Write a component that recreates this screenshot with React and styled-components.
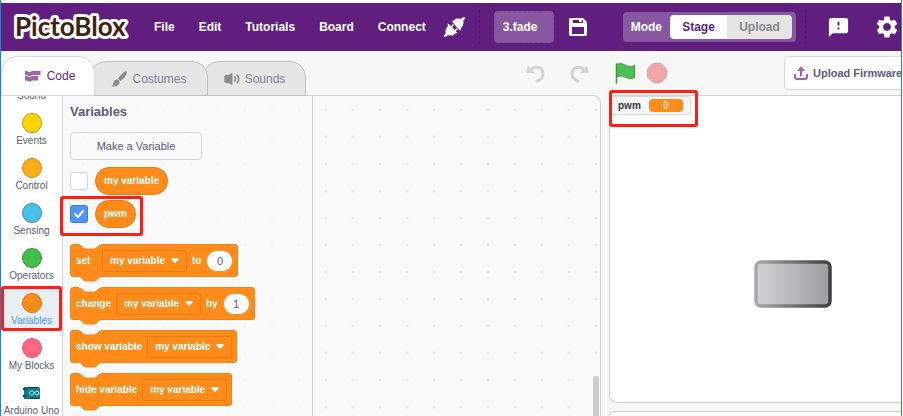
import React from "react";
import styled, { createGlobalStyle, css } from "styled-components";
import { MdFeedback, MdSettings } from "react-icons/md";

const Global = createGlobalStyle`
  * { box-sizing: border-box; }
  body { margin: 0; background: #fff; }
  body, button, input, select { font-family: "Liberation Sans", Arial, sans-serif; }
  button { margin: 0; padding: 0; border: 0; background: none; cursor: pointer; }
  svg { display: block; flex: none; }
`;

const Window = styled.div`
  display: flex;
  flex-direction: column;
  height: 100vh;
  margin-right: 1px;
  padding-top: 3px;
  border-left: 1px solid #1a84d8;
  border-right: 1px solid #2a7fb8;
  overflow: hidden;
  background: #fff;
`;

const MenuBar = styled.header`
  display: flex;
  align-items: center;
  flex: none;
  height: 48px;
  padding: 0 1px 0 11px;
  background: #601f7e;
  color: #fff;
`;

const Logo = styled.a`
  display: flex;
  text {
    font: 700 26px "Lato", sans-serif;
    fill: #3d2314;
    stroke: #fff;
    stroke-width: 6px;
    stroke-linejoin: round;
    paint-order: stroke;
  }
`;

const Menu = styled.nav`
  display: flex;
  align-items: center;
  gap: 24px;
  margin-left: 22px;
`;

const MenuItem = styled.button`
  color: #fff;
  font-size: 12px;
  font-weight: bold;
  line-height: 16px;
`;

const IconButton = styled.button`
  display: flex;
  color: #fff;
  margin-left: ${(p) => p.$gap || 0}px;
`;

const Divider = styled.div`
  height: 34px;
  margin-left: ${(p) => p.$gap}px;
  border-left: 1px dashed #501a6a;
`;

const ProjectName = styled.input`
  width: 60px;
  height: 32px;
  margin-left: 14px;
  padding: 0 8px;
  border: 1px dashed #7d4c96;
  border-radius: 4px;
  background: #87589f;
  color: #fff;
  font-size: 12px;
  font-weight: bold;
`;

const BarEnd = styled.div`
  display: flex;
  align-items: center;
  margin-left: auto;
`;

const ModeBox = styled.div`
  display: flex;
  align-items: center;
  height: 30px;
  padding: 3px 4px 3px 8px;
  border-radius: 4px;
  background: #87589f;
  font-size: 12px;
  font-weight: bold;
`;

const ModeSwitch = styled.div`
  display: flex;
  height: 24px;
  margin-left: 8px;
  border-radius: 4px;
  overflow: hidden;
`;

const ModeOption = styled.button`
  width: ${(p) => (p.$active ? 57 : 65)}px;
  background: ${(p) => (p.$active ? "#fff" : "#e5e5e5")};
  color: ${(p) => (p.$active ? "#601f7e" : "#85858c")};
  font-size: 12px;
  font-weight: bold;
`;

const Main = styled.main`
  display: grid;
  grid-template-columns: minmax(0, 1fr) 292px;
  column-gap: 8px;
  flex: 1;
  min-height: 0;
  background: #f7f7f7;
`;

const Editor = styled.section`
  display: flex;
  flex-direction: column;
  min-width: 0;
  min-height: 0;
`;

const TabRow = styled.div`
  display: flex;
  align-items: flex-end;
  flex: none;
  height: 45px;
  padding-right: 12px;
`;

const Tab = styled.button`
  display: flex;
  align-items: center;
  justify-content: center;
  gap: ${(p) => (p.$active ? 6 : 5)}px;
  width: ${(p) => p.$width}px;
  height: ${(p) => (p.$active ? 40 : 35)}px;
  margin-left: ${(p) => (p.$active ? 0 : -5)}px;
  padding-left: ${(p) => (p.$active ? 4 : 0)}px;
  border: 1px solid ${(p) => (p.$active ? "#d9d9d9" : "#bfbfbf")};
  border-radius: 16px 16px 0 0;
  background: ${(p) => (p.$active ? "#fff" : "#e6e6e6")};
  color: ${(p) => (p.$active ? "#601f7e" : "#7c8194")};
  font-size: 12px;
  position: relative;
  z-index: ${(p) => p.$layer};
`;

const History = styled.div`
  display: flex;
  gap: 25px;
  margin: 0 0 13px auto;
`;

const EditorBody = styled.div`
  display: flex;
  flex: 1;
  min-height: 0;
  border-top: 1px solid #cfcfcf;
  border-right: 1px solid #cfcfcf;
  border-top-right-radius: 8px;
  margin-top: -1px;
  overflow: hidden;
  background: #f9f9f9;
`;

const CategoryPane = styled.nav`
  flex: none;
  width: 62px;
  border-right: 1px solid #d4d4d4;
  background: #fff;
  overflow: hidden;
`;

const CategoryList = styled.div`
  margin-top: -35px;
`;

const Category = styled.button`
  display: flex;
  flex-direction: column;
  align-items: center;
  width: 100%;
  height: 45px;
  padding-top: 7px;
  gap: 2px;
  background: ${(p) => (p.$selected ? "#e9eef2" : "transparent")};
  color: ${(p) => (p.$selected ? "#4c97ff" : "#575e75")};
  font-size: 10px;
  line-height: 12px;
  white-space: nowrap;
`;

const Dot = styled.span`
  width: 20px;
  height: 20px;
  flex: none;
  border: 1px solid ${(p) => p.$edge};
  border-radius: 50%;
  background: ${(p) => p.$fill};
`;

const BoardIcon = styled.span`
  display: flex;
  align-items: center;
  height: 20px;
`;

const dots = css`
  background-image: radial-gradient(circle at 13px 13px, ${(p) => p.$dot} 1px, transparent 2px);
  background-size: 27px 27px;
`;

const Flyout = styled.div`
  display: flex;
  flex-direction: column;
  align-items: flex-start;
  flex: none;
  width: 250px;
  padding: 8px 0 0 7px;
  border-right: 1px solid #d0d0d0;
  ${dots}
  background-position: 7px 1px;
`;

const FlyoutTitle = styled.h2`
  margin: 0 0 12px;
  color: #575e75;
  font-size: 13px;
  line-height: 16px;
`;

const MakeButton = styled.button`
  width: 132px;
  height: 28px;
  flex: none;
  margin-bottom: 7px;
  border: 1px solid #d6d6d6;
  border-radius: 4px;
  color: #575e75;
  font-size: 11px;
`;

const VariableRow = styled.label`
  display: flex;
  align-items: center;
  flex: none;
  gap: 7px;
  height: 28px;
  margin-bottom: ${(p) => (p.$last ? 16 : 5)}px;
`;

const Check = styled.span`
  display: grid;
  width: 18px;
  height: 18px;
  > * { grid-area: 1 / 1; place-self: center; }
  svg { pointer-events: none; }
`;

const CheckInput = styled.input`
  appearance: none;
  width: 18px;
  height: 18px;
  margin: 0;
  border: 1px solid #d6d6d6;
  border-radius: 3px;
  background: #fff;
  &:checked { border-color: #3d79cc; background: #4c97ff; }
`;

const Pill = styled.span`
  height: 28px;
  padding: 0 8px;
  border: 1px solid #e67e14;
  border-radius: 14px;
  background: #ff8c1a;
  color: #fff;
  font-size: 10px;
  font-weight: bold;
  line-height: 26px;
`;

const BlockBox = styled.div`
  position: relative;
  display: flex;
  align-items: center;
  flex: none;
  gap: 5px;
  height: 33px;
  margin-bottom: 10px;
  padding: 0 4px 0 5px;
  border: 1px solid #f08415;
  border-radius: 3px;
  background: #ff8c1a;
  color: #fff;
  font-size: 10px;
  font-weight: bold;
  white-space: nowrap;
`;

const Notch = styled.svg`
  position: absolute;
  left: 6px;
  top: ${(p) => (p.$bottom ? "100%" : "-1px")};
`;

const BlockWord = styled.span`
  min-width: ${(p) => (p.$lead ? 21 : 0)}px;
`;

const Picker = styled.span`
  display: grid;
  align-items: center;
  width: 85px;
  > * { grid-area: 1 / 1; }
  svg { justify-self: end; margin-right: 8px; pointer-events: none; }
`;

const PickerSelect = styled.select`
  appearance: none;
  width: 100%;
  height: 22px;
  padding: 0 16px 0 7px;
  border: 1px solid #e67d12;
  border-radius: 3px;
  background: #ff8c1a;
  color: #fff;
  font-size: 10px;
  font-weight: bold;
`;

const NumberInput = styled.input`
  width: 27px;
  height: 22px;
  padding: 0;
  border: 1px solid #e9973f;
  border-radius: 11px;
  background: #fff;
  color: #575e75;
  font-size: 11px;
  text-align: center;
`;

const Workspace = styled.div`
  position: relative;
  flex: 1;
  ${dots}
  background-position: 0 1px;
`;

const ScrollThumb = styled.div`
  position: absolute;
  right: 1px;
  bottom: 0;
  width: 6px;
  height: 40px;
  border-radius: 3px 3px 0 0;
  background: #cbcbcb;
`;

const FlyoutThumb = styled.div`
  width: 6px;
  height: 2px;
  flex: none;
  align-self: flex-end;
  margin: auto 5px 0 0;
  border-radius: 3px 3px 0 0;
  background: #cbcbcb;
`;

const StageColumn = styled.aside`
  display: flex;
  flex-direction: column;
  min-width: 0;
  overflow: hidden;
`;

const StageBar = styled.div`
  display: flex;
  align-items: center;
  flex: none;
  height: 44px;
  padding-left: 6px;
  gap: 11px;
`;

const FirmwareButton = styled.button`
  display: flex;
  align-items: center;
  gap: 5px;
  flex: none;
  height: 34px;
  width: 130px;
  margin: 0 -13px 0 auto;
  padding-left: 9px;
  border: 1px solid #d9d9d9;
  border-radius: 4px;
  background: #fff;
  color: #575e75;
  font-size: 11px;
  font-weight: bold;
  white-space: nowrap;
`;

const Stage = styled.div`
  position: relative;
  flex: 1;
  margin-bottom: 8px;
  border: 1px solid #cfcfcf;
  border-right: 0;
  border-radius: 0 0 0 8px;
  background: #fff;
`;

const Monitor = styled.div`
  position: absolute;
  left: 0;
  top: 0;
  display: flex;
  align-items: center;
  gap: 8px;
  height: 19px;
  padding: 0 7px 0 8px;
  border: 1px solid #d4dadd;
  border-left: 0;
  border-radius: 3px;
  background: #f7f7f7;
  color: #33363d;
  font-size: 10px;
  font-weight: bold;
`;

const MonitorValue = styled.output`
  width: 34px;
  height: 13px;
  border-radius: 4px;
  background: #ff8c1a;
  color: #ffe3c6;
  line-height: 13px;
  text-align: center;
`;

const Sprite = styled.svg`
  position: absolute;
  left: 144px;
  top: 164px;
`;

const SpritePane = styled.div`
  flex: none;
  height: 5px;
  border: 1px solid #cfcfcf;
  border-width: 1px 0 0 1px;
  border-top-left-radius: 8px;
  background: #fff;
`;

const Highlight = styled.span`
  position: absolute;
  inset: ${(p) => p.$inset};
  border: 3px solid #ff1f12;
  border-radius: 3px;
  pointer-events: none;
`;

const Anchor = styled.div`
  position: relative;
`;

const PlugIcon = () => (
  <svg width="22" height="20" viewBox="0 0 22 20" fill="currentColor">
    <path d="M7.500 4 10 3.500 12 1.500 17.300 1.800 18.300.9C18.500-.2 20-.5 20.800.4 21.500 1.300 21 2.300 20.200 2.500L19.300 3.500 19.600 6 18.500 9.300 17 11 16.500 13.500 15.500 13.200Z" />
    <path d="M13.500 16 11 16.500 9 18.500 3.700 18.200 2.700 19.100C2.500 20.200 1 20.500.2 19.600-.5 18.700 0 17.700.8 17.500L1.700 16.500 1.400 14 2.500 10.700 4 9 3.500 6.500 5.500 7.500Z" />
    <path d="m6.500 9.500 2.500-2.500 1 1-2 2.500ZM10.500 13l2.500-2 .8 1.200-2.200 2Z" />
  </svg>
);

const SaveIcon = () => (
  <svg width="18" height="18" viewBox="0 0 18 18" fill="currentColor" fillRule="evenodd">
    <path d="M1 0h13l4 4v13l-1 1H1l-1-1V1Zm3 2v3h10V2h-1v2h-3V2Zm-1 7v7h12V9Z" />
  </svg>
);

const CodeIcon = () => (
  <svg width="16" height="12" viewBox="0 0 16 12" fill="#a55fb3">
    <path d="M0 1h2l1.500 1h2L7 1h8.500v4H7L5.500 6h-2L2 5H0Z" />
    <path d="M0 6h2l1.500 1h2L7 6h6v4.500H7L5.500 11.500h-2L2 10.500H0Z" />
  </svg>
);

const BrushIcon = () => (
  <svg width="16" height="16" viewBox="0 0 16 16" fill="#8c8c8c">
    <path d="M15.500.3c.8.500.3 2-.5 3.400-1.300 2.500-3.500 5.500-5.500 6.300L7 7.800C8 5.500 11 2.600 13.200 1c1-.7 1.800-1 2.300-.7Z" />
    <path d="M6 8.600c1.200.2 2.400 1.200 2.600 2.500C8.500 14 5.500 16.500.3 15.200c1.700-.7 1.700-2 2.200-3.800.4-1.600 1.800-2.900 3.500-2.800Z" />
  </svg>
);

const SoundIcon = () => (
  <svg width="16" height="14" viewBox="0 0 16 14">
    <path d="M7 1.500C8 .7 8.500 1 8.500 2v10c0 1-.5 1.300-1.500.5L4.500 11H2C.7 11 .2 10 .2 7S.7 3 2 3h2.500Z" fill="#8c8c8c" />
    <path d="M10.800 5q1.500 2 0 4M13.300 3.200q2.800 3.800 0 7.600" fill="none" stroke="#8c8c8c" strokeWidth="1.600" strokeLinecap="round" />
  </svg>
);

const UndoIcon = ({ redo }) => (
  <svg width="19" height="18" viewBox="0 0 19 18">
    <g transform={redo ? "matrix(-1 0 0 1 19 0)" : undefined}>
      <path d="M5 4.500C9 .5 16.500 2 17 8.500c.2 4-3 7-6 7.500" fill="none" stroke="#d3d3d3" strokeWidth="3" strokeLinecap="round" />
      <path d="M2 .5 9 8H1q-1 0-.8-1Z" fill="#d3d3d3" />
    </g>
  </svg>
);

const FlagIcon = () => (
  <svg width="21" height="21" viewBox="0 0 21 21">
    <path d="M1.500 1.500C6-.5 8 1 11 2.700c3 1.500 5.500 1 8.500-.2v12c-3.500 1.800-6 1.200-9-.3-3-1.400-5.500-1.700-9-.2Z" fill="#4cbf56" stroke="#45993d" />
    <path d="M1.500 1v19" stroke="#45993d" strokeWidth="1.500" strokeLinecap="round" />
  </svg>
);

const StopIcon = () => (
  <svg width="20" height="20" viewBox="0 0 20 20">
    <path d="M6 .5h8L19.500 6v8L14 19.500H6L.5 14V6Z" fill="#f1a5a7" stroke="#dda1a4" />
  </svg>
);

const UploadIcon = () => (
  <svg width="14" height="14" viewBox="0 0 14 14" fill="none" stroke="#a55fb3" strokeWidth="2">
    <path d="M1 8v3q0 2 2 2h8q2 0 2-2V8M7 10V3" />
    <path d="M3 5 7 .3 11 5Z" fill="#a55fb3" stroke="none" />
  </svg>
);

const ArduinoIcon = () => (
  <svg width="18" height="14" viewBox="0 0 18 14">
    <path d="M1 1h15l1 2v10H1Z" fill="#087c8e" />
    <path d="M0 3h4M0 10h3" stroke="#17485a" strokeWidth="2" />
    <path d="M5 1.500h10M7 12.500h9" stroke="#103f4d" />
    <path d="M11.500 7c-1-1.500-2-2-3-2a2 2 0 0 0 0 4c1 0 2-.5 3-2s1.500-2 2.500-2a2 2 0 0 1 0 4c-1 0-1.500-.5-2.500-2Z" fill="none" stroke="#e6f7f8" />
  </svg>
);

const notchPath = "M0 0C3 0 3.500 1 5 2.500S7 5 9 5H17C19 5 19.500 4 21 2.500S23 0 26 0";

const Block = ({ verb, joiner, value }) => (
  <BlockBox>
    <Notch width="26" height="6" viewBox="0 0 26 6">
      <path d={notchPath} fill="#f9f9f9" stroke="#f08415" />
      <path d="M2 0h22" stroke="#f9f9f9" strokeWidth="2" />
    </Notch>
    <BlockWord $lead>{verb}</BlockWord>
    <Picker>
      <PickerSelect aria-label={`${verb} which variable`} defaultValue="my variable">
        <option>my variable</option>
        <option>pwm</option>
      </PickerSelect>
      <svg width="8" height="5" viewBox="0 0 8 5"><path d="M1 .5h6l.3.8L4 4.500.7 1.300Z" fill="#fff" stroke="#fff" strokeLinejoin="round" /></svg>
    </Picker>
    {joiner && <BlockWord>{joiner}</BlockWord>}
    {joiner && <NumberInput aria-label={`${verb} ${joiner}`} defaultValue={value} />}
    <Notch $bottom width="26" height="6" viewBox="0 0 26 6">
      <path d={notchPath} fill="#ff8c1a" stroke="#f08415" />
      <path d="M2 0h22" stroke="#ff8c1a" strokeWidth="2" />
    </Notch>
  </BlockBox>
);

const categories = [
  ["Sound", "#cf63cf", "#bd42bd"],
  ["Events", "#ffd500", "#cc9900"],
  ["Control", "#ffab19", "#cf8b17"],
  ["Sensing", "#4cbfe6", "#2e8eb8"],
  ["Operators", "#40bf4a", "#389438"],
  ["Variables", "#ff8c1a", "#db6e00"],
  ["My Blocks", "#ff6680", "#ff4d6a"],
];

export default function App() {
  return (
    <Window>
      <Global />
      <MenuBar>
        <Logo href="#home" aria-label="PictoBlox home">
          <svg width="120" height="34" viewBox="0 0 120 34"><text x="3" y="26">PictoBlox</text></svg>
        </Logo>
        <Menu>
          {["File", "Edit", "Tutorials", "Board", "Connect"].map((m) => <MenuItem key={m}>{m}</MenuItem>)}
        </Menu>
        <IconButton $gap={18} aria-label="Connection"><PlugIcon /></IconButton>
        <Divider $gap={13} />
        <ProjectName aria-label="Project name" defaultValue="3.fade" />
        <IconButton $gap={15} aria-label="Save"><SaveIcon /></IconButton>
        <BarEnd>
          <ModeBox>
            Mode
            <ModeSwitch>
              <ModeOption $active>Stage</ModeOption>
              <ModeOption>Upload</ModeOption>
            </ModeSwitch>
          </ModeBox>
          <Divider $gap={9} />
          <IconButton $gap={21} aria-label="Feedback"><MdFeedback size={23} /></IconButton>
          <IconButton $gap={24} aria-label="Settings"><MdSettings size={26} /></IconButton>
        </BarEnd>
      </MenuBar>

      <Main>
        <Editor>
          <TabRow>
            <Tab $active $width={94} $layer={3}><CodeIcon />Code</Tab>
            <Tab $width={118} $layer={2}><BrushIcon />Costumes</Tab>
            <Tab $width={103} $layer={1}><SoundIcon />Sounds</Tab>
            <History>
              <IconButton aria-label="Undo"><UndoIcon /></IconButton>
              <IconButton aria-label="Redo"><UndoIcon redo /></IconButton>
            </History>
          </TabRow>
          <EditorBody>
            <CategoryPane>
              <CategoryList>
                {categories.map(([name, fill, edge]) => (
                  <Anchor key={name}>
                    <Category $selected={name === "Variables"}>
                      <Dot $fill={fill} $edge={edge} />
                      {name}
                    </Category>
                    {name === "Variables" && <Highlight $inset="0" />}
                  </Anchor>
                ))}
                <Category>
                  <BoardIcon><ArduinoIcon /></BoardIcon>
                  Arduino Uno
                </Category>
              </CategoryList>
            </CategoryPane>
            <Flyout $dot="#f5f5f5">
              <FlyoutTitle>Variables</FlyoutTitle>
              <MakeButton>Make a Variable</MakeButton>
              <VariableRow>
                <Check><CheckInput type="checkbox" /></Check>
                <Pill>my variable</Pill>
              </VariableRow>
              <Anchor>
                <VariableRow $last>
                  <Check>
                    <CheckInput type="checkbox" defaultChecked />
                    <svg width="12" height="10" viewBox="0 0 12 10" fill="none" stroke="#fff" strokeWidth="2" strokeLinecap="round" strokeLinejoin="round"><path d="m2 5 3 3 5-6" /></svg>
                  </Check>
                  <Pill>pwm</Pill>
                </VariableRow>
                <Highlight $inset="-4px -7px 8px -10px" />
              </Anchor>
              <Block verb="set" joiner="to" value="0" />
              <Block verb="change" joiner="by" value="1" />
              <Block verb="show variable" />
              <Block verb="hide variable" />
              <FlyoutThumb />
            </Flyout>
            <Workspace $dot="#e8e8e8"><ScrollThumb /></Workspace>
          </EditorBody>
        </Editor>

        <StageColumn>
          <StageBar>
            <IconButton aria-label="Go"><FlagIcon /></IconButton>
            <IconButton aria-label="Stop"><StopIcon /></IconButton>
            <FirmwareButton><UploadIcon />Upload Firmware</FirmwareButton>
          </StageBar>
          <Stage>
            <Monitor>
              pwm
              <MonitorValue>0</MonitorValue>
              <Highlight $inset="-7px -8px -13px -1px" />
            </Monitor>
            <Sprite width="79" height="48" viewBox="0 0 79 48">
              <defs>
                <linearGradient id="face"><stop stopColor="#d2d3d5" /><stop offset="1" stopColor="#9c9da1" /></linearGradient>
                <linearGradient id="rim"><stop stopColor="#a7a9ac" /><stop offset="1" stopColor="#3e3f40" /></linearGradient>
              </defs>
              <rect x="2" y="2" width="74" height="44" rx="5" fill="url(#face)" stroke="url(#rim)" strokeWidth="3.500" />
            </Sprite>
          </Stage>
          <SpritePane />
        </StageColumn>
      </Main>
    </Window>
  );
}
